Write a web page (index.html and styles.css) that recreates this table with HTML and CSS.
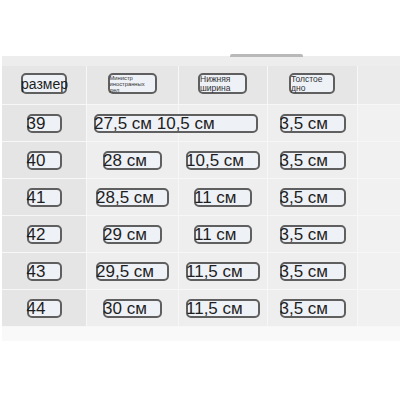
FILE: index.html
```html
<!DOCTYPE html>
<html lang="ru">
<head>
<meta charset="utf-8">
<link rel="stylesheet" href="styles.css">
</head>
<body>
<div class="sheet">
  <div class="strip"><span class="tab"></span></div>
  <div class="table">
    <div class="cell hd c1"><span class="box w46 big">размер</span></div>
    <div class="cell hd"><span class="box w49 tiny">Министр<br>иностранных<br>дел</span></div>
    <div class="cell hd"><span class="box w49 small">Нижняя<br>ширина</span></div>
    <div class="cell hd"><span class="box w46 small">Толстое<br>дно</span></div>
    <div class="cell hd c5"></div>

    <div class="cell c1"><span class="box w35">39</span></div>
    <div class="cell left"><span class="box w164 over">27,5 см 10,5 см</span></div>
    <div class="cell"></div>
    <div class="cell"><span class="box w66">3,5 см</span></div>
    <div class="cell c5"></div>

    <div class="cell c1"><span class="box w35">40</span></div>
    <div class="cell"><span class="box w59">28 см</span></div>
    <div class="cell"><span class="box w74">10,5 см</span></div>
    <div class="cell"><span class="box w66">3,5 см</span></div>
    <div class="cell c5"></div>

    <div class="cell c1"><span class="box w35">41</span></div>
    <div class="cell"><span class="box w73">28,5 см</span></div>
    <div class="cell"><span class="box w58">11 см</span></div>
    <div class="cell"><span class="box w66">3,5 см</span></div>
    <div class="cell c5"></div>

    <div class="cell c1"><span class="box w35">42</span></div>
    <div class="cell"><span class="box w59">29 см</span></div>
    <div class="cell"><span class="box w58">11 см</span></div>
    <div class="cell"><span class="box w66">3,5 см</span></div>
    <div class="cell c5"></div>

    <div class="cell c1"><span class="box w35">43</span></div>
    <div class="cell"><span class="box w73">29,5 см</span></div>
    <div class="cell"><span class="box w74">11,5 см</span></div>
    <div class="cell"><span class="box w66">3,5 см</span></div>
    <div class="cell c5"></div>

    <div class="cell c1"><span class="box w35">44</span></div>
    <div class="cell"><span class="box w59">30 см</span></div>
    <div class="cell"><span class="box w74">11,5 см</span></div>
    <div class="cell"><span class="box w66">3,5 см</span></div>
    <div class="cell c5"></div>
  </div>
  <div class="foot"></div>
</div>
</body>
</html>
```
FILE: styles.css
```css
html, body {
  margin: 0;
  background: #ffffff;
}
body {
  font-family: "Liberation Sans", Arial, sans-serif;
  color: #1e1e1e;
}
.sheet {
  padding-top: 56px;
  padding-left: 2px;
}
.strip {
  height: 10px;
  background: #ededed;
  display: flex;
  align-items: flex-start;
}
.tab {
  margin-left: 228px;
  margin-top: -2px;
  width: 73px;
  height: 3px;
  border-radius: 2px 2px 0 0;
  background: #b9b9b9;
}
.table {
  display: grid;
  grid-template-columns: 84px 91px 88px 89px 42px;
  grid-template-rows: 38px repeat(6, 36px);
  gap: 1px;
  background: #f7f7f7;
  padding-bottom: 1px;
}
.foot {
  height: 14px;
  background: #f9f9f9;
}
.cell {
  background: #eeeeee;
  display: flex;
  align-items: center;
  justify-content: center;
  min-width: 0;
}
.cell.left {
  justify-content: flex-start;
  padding-left: 7px;
}
.cell.c1 {
  background: #e5e5e5;
}
.cell.c5 {
  background: #f1f1f1;
}
.cell.hd {
  background: #e6e6e6;
  align-items: flex-start;
  padding-top: 7px;
}
.cell.hd.c5 {
  background: #ebebeb;
}
.box {
  box-sizing: border-box;
  flex: none;
  height: 19px;
  border: 2px solid #5f5f5f;
  border-radius: 5px;
  background: #eef1f6;
  font-size: 17px;
  line-height: 16px;
  padding-left: 0;
  white-space: nowrap;
  overflow: visible;
  text-indent: -2px;
}
.box.over {
  position: relative;
  z-index: 1;
}
.box.big {
  height: 21px;
  font-size: 14px;
  line-height: 18px;
}
.box.small {
  height: 21px;
  font-size: 8.5px;
  line-height: 8.5px;
  white-space: nowrap;
  color: #333;
  text-indent: 0;
  margin-left: -1px;
}
.box.tiny {
  height: 21px;
  font-size: 5.8px;
  line-height: 6px;
  white-space: nowrap;
  color: #333;
  text-indent: 0;
  margin-left: -1px;
}
.w35 { width: 35px; }
.w46 { width: 46px; }
.w49 { width: 49px; }
.w58 { width: 58px; }
.w59 { width: 59px; }
.w66 { width: 66px; }
.w73 { width: 73px; }
.w74 { width: 74px; }
.w164 { width: 164px; }
```
